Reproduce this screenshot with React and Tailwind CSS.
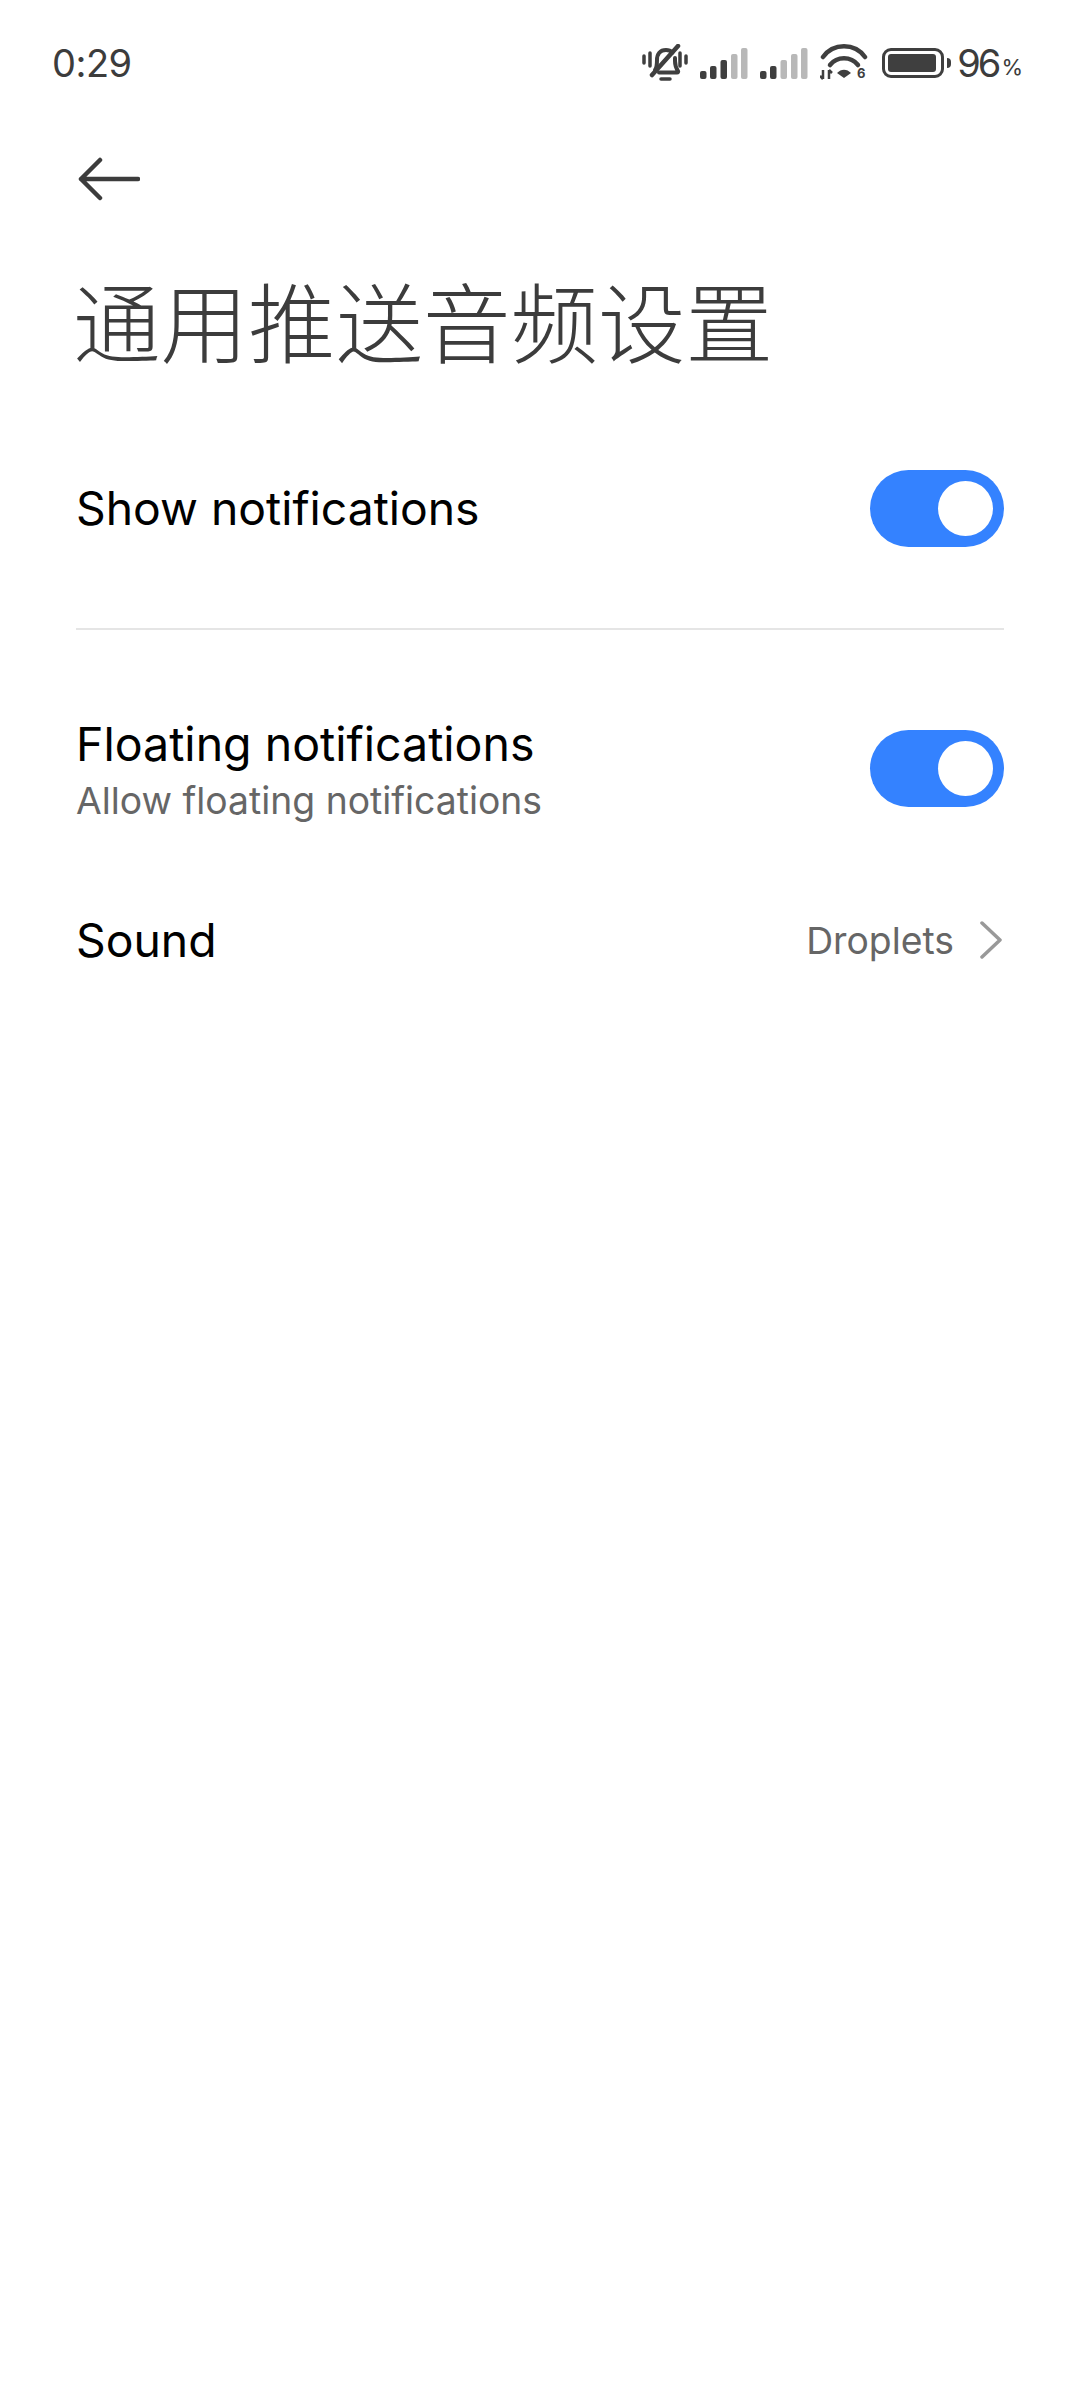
const sans = 'font-["Inter","Noto_Sans_CJK_SC",sans-serif]';

function SignalBars({ active }) {
  const bars = [
    { x: 0, h: 8 },
    { x: 10, h: 13 },
    { x: 20.5, h: 19 },
    { x: 31, h: 25 },
    { x: 41, h: 31 },
  ];
  return (
    <svg width="48" height="32" viewBox="0 0 48 32">
      {bars.map((bar, i) => (
        <rect
          key={bar.x}
          x={bar.x}
          y={32 - bar.h}
          width="6.5"
          height={bar.h}
          rx="2"
          fill={i < active ? '#3f3f3f' : '#b8b8b8'}
        />
      ))}
    </svg>
  );
}

function MutedBell() {
  return (
    <svg width="46" height="38" viewBox="0 0 46 38" fill="none" stroke="#3f3f3f" strokeLinecap="round">
      <path d="M2 12v7M8 9v13M38 9v13M44 12v7" strokeWidth="3.500" />
      <path d="M13 26c1.500-2 2-4 2-10 0-6 3-10 9-10 3 0 5 1 6.500 2.500M33 14v3c0 4 1 7 3 10 .5 1 0 1.500-1 1.500H17" strokeWidth="4" />
      <path d="M10 31L36 2" strokeWidth="4.500" />
      <path d="M19 35h9" strokeWidth="3.500" />
    </svg>
  );
}

function Wifi() {
  return (
    <svg width="48" height="38" viewBox="0 0 48 38" fill="none" stroke="#3f3f3f">
      <path d="M3 13A26 26 0 0 1 45 13" strokeWidth="4.500" strokeLinecap="round" />
      <path d="M10 21A18 18 0 0 1 38 21" strokeWidth="4.500" strokeLinecap="round" />
      <path d="M17 29c4-4.500 10-4.500 14 0l-7 5z" fill="#3f3f3f" stroke="none" />
      <path d="M3 26v9M0 32l3 3M9 35v-9M9 26l3 3" strokeWidth="2.500" />
      <text x="37" y="34" fontSize="13" fontWeight="700" fill="#3f3f3f" stroke="none" fontFamily="Inter">6</text>
    </svg>
  );
}

function Battery() {
  return (
    <div className="flex items-center gap-[3px]">
      <div className="w-[62px] h-[30px] rounded-[9px] border-[3px] border-[#3f3f3f] p-[3px]">
        <div className="h-full w-[48px] rounded-[3px] bg-[#3f3f3f]" />
      </div>
      <div className="w-[4px] h-[10px] rounded-r-full bg-[#3f3f3f]" />
    </div>
  );
}

function Toggle() {
  return (
    <div className="w-[134px] h-[77px] rounded-full bg-[#3482ff] flex items-center justify-end pr-[11px] shrink-0">
      <div className="w-[55px] h-[55px] rounded-full bg-white" />
    </div>
  );
}

export default function App() {
  return (
    <div className={`w-[1080px] h-[2400px] bg-white ${sans}`}>
      {/* status bar */}
      <div className="h-[126px] flex items-center justify-between pl-[52px] pr-[58px] text-[#3c3c3c]">
        <span className="text-[38px] leading-none tracking-[-0.5px]">0:29</span>
        <div className="flex items-center">
          <MutedBell />
          <div className="ml-[12px]"><SignalBars active={3} /></div>
          <div className="ml-[12px]"><SignalBars active={2} /></div>
          <div className="ml-[12px]"><Wifi /></div>
          <div className="ml-[14px]"><Battery /></div>
          <span className="ml-[6px] text-[38px] leading-none tracking-[-3px]">96</span>
          <span className="ml-[3px] mt-[8px] text-[22px] leading-none tracking-[-1px]">%</span>
        </div>
      </div>

      <div className="h-[106px] flex items-center pl-[78px]">
        <svg width="62" height="44" viewBox="0 0 62 44" fill="none" stroke="#3c3c3c" strokeWidth="4.500" strokeLinecap="round" strokeLinejoin="round">
          <path d="M3 22h57M22 3L3 22l19 19" />
        </svg>
      </div>

      <h1 className="h-[186px] flex items-center pl-[73px] pt-[2px] text-[87.500px] font-light text-[#3c3c3c] leading-none">
        通用推送音频设置
      </h1>

      <div className="px-[76px]">
        <div className="h-[180px] flex items-center justify-between">
          <span className="text-[46.300px] pt-[2px] text-black">Show notifications</span>
          <Toggle />
        </div>
        <div className="mt-[30px] h-[2px] bg-[#e5e5e5]" />
        <div className="mt-[48px] h-[180px] flex items-center justify-between">
          <div className="flex flex-col pt-[4px]">
            <span className="text-[46.500px] leading-[56px] text-black">Floating notifications</span>
            <span className="mt-[6px] text-[37.300px] leading-[46px] text-[#666666]">Allow floating notifications</span>
          </div>
          <Toggle />
        </div>
        <div className="h-[164px] flex items-center justify-between">
          <span className="text-[46.300px] pt-[2px] text-black">Sound</span>
          <div className="flex items-center gap-[26px] pr-[2px]">
            <span className="text-[37.300px] pt-[1px] text-[#666666]">Droplets</span>
            <svg width="22" height="38" viewBox="0 0 22 38" fill="none" stroke="#999999" strokeWidth="3.500" strokeLinecap="round" strokeLinejoin="round">
              <path d="M2 2l18 17L2 36" />
            </svg>
          </div>
        </div>
      </div>
    </div>
  );
}
